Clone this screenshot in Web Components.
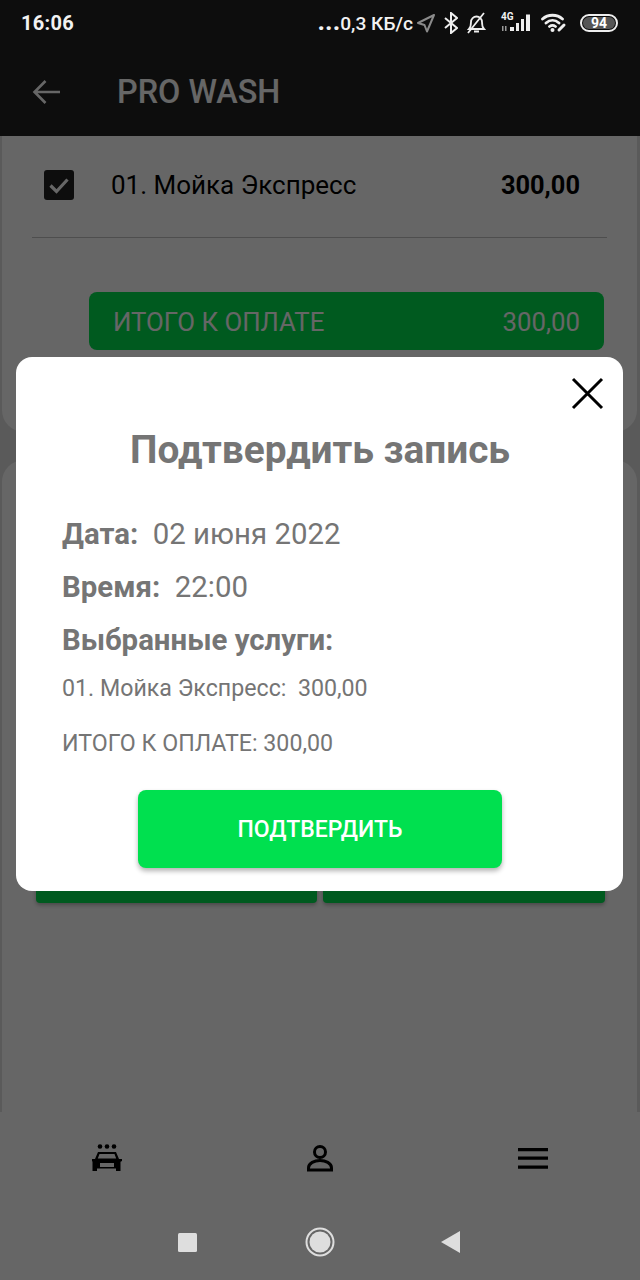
<!DOCTYPE html>
<html lang="ru">
<head>
<meta charset="utf-8">
<title>PRO WASH</title>
<style>
  html, body { margin: 0; padding: 0; background: #666; }
  body { font-family: Roboto, "Liberation Sans", sans-serif; }
</style>
</head>
<body>
<wash-app>
  <status-bar slot="status"></status-bar>
  <app-header slot="content" title="PRO WASH"></app-header>
  <div slot="content" style="flex:1;display:flex;flex-direction:column;min-height:0">
    <order-card></order-card>
    <actions-card></actions-card>
  </div>
  <bottom-nav slot="content"></bottom-nav>
  <confirm-modal slot="modal"></confirm-modal>
  <nav-keys slot="keys"></nav-keys>
</wash-app>

<script>
class WashApp extends HTMLElement {
  connectedCallback() {
    this.attachShadow({ mode: 'open' });
    this.shadowRoot.innerHTML = `
      <style>
        :host { display: flex; flex-direction: column; position: relative; width: 640px; height: 1280px; overflow: hidden; background: #e2e2e2; }
        .content { flex: 1; display: flex; flex-direction: column; min-height: 0; }
        .status { position: relative; z-index: 3; }
        .scrim {
          position: absolute; left: 0; right: 0; top: 46px; bottom: 0;
          background: rgba(0, 0, 0, 0.6);
          z-index: 2;
          padding: 311px 17px 0 16px;
        }
        .keys { position: absolute; left: 0; right: 0; bottom: 0; z-index: 3; }
      </style>
      <div class="status"><slot name="status"></slot></div>
      <div class="content"><slot name="content"></slot></div>
      <div class="scrim"><slot name="modal"></slot></div>
      <div class="keys"><slot name="keys"></slot></div>
    `;
  }
}

class StatusBar extends HTMLElement {
  connectedCallback() {
    this.attachShadow({ mode: 'open' });
    this.shadowRoot.innerHTML = `
      <style>
        :host { display: flex; align-items: center; justify-content: space-between; height: 46px; padding: 0 22px 0 21px; background: #0d0d0d; color: #f2f2f2; font-weight: 700; }
        .time { font-size: 20px; letter-spacing: .3px; }
        .right { display: flex; align-items: center; }
        .speed { font-size: 19.200px; font-weight: 500; margin-right: 3px; white-space: nowrap; }
        .dots { font-size: 26px; font-weight: 700; line-height: 0; }
        svg { display: block; flex: none; }
        .g4 { position: relative; width: 32px; height: 24px; margin-left: 12px; }
        .g4 span { position: absolute; left: 2px; top: 0; font-size: 10px; line-height: 12px; font-weight: 700; }
        .batt { width: 38px; height: 18px; box-sizing: border-box; margin-left: 13px; border: 2px solid #eee; border-radius: 9px; padding: 1px; background: #0d0d0d; }
        .batt span { display: block; height: 100%; border-radius: 6px; background: #555; font-size: 14px; line-height: 12px; text-align: center; color: #fff; }
      </style>
      <span class="time">16:06</span>
      <div class="right">
        <span class="speed"><span class="dots">...</span>0,3 КБ/с</span>
        <svg width="20" height="20" viewBox="0 0 20 20" fill="none" stroke="#8a8a8a" stroke-width="2" stroke-linejoin="round"><path d="M18 2 2 10l6.500 2L11 18.500z"/></svg>
        <svg style="margin-left:8px" width="14" height="22" viewBox="0 0 14 22" fill="none" stroke="#eee" stroke-width="2" stroke-linejoin="miter"><path d="M1 6l12 10-6 5V1l6 5L1 16"/></svg>
        <svg style="margin-left:8px" width="21" height="22" viewBox="0 0 21 22" fill="none" stroke="#eee" stroke-width="1.800"><path d="M3 17c2-2 2-4 2-7 0-3 2.500-5.500 5.500-5.500S16 7 16 10c0 3 0 5 2 7z"/><path d="M8 19.500h5M2 21 18 1"/></svg>
        <div class="g4"><span>4G</span>
          <svg width="32" height="24" viewBox="0 0 32 24" fill="#eee"><path fill="#999" d="M3 15h1.500v5H3zM6 15h1.500v5H6z"/><path d="M11 16h4v4h-4zM17 12h3v8h-3zM22 8h3v12h-3zM27 3.500h4V20h-4z"/></svg>
        </div>
        <svg style="margin-left:10px" width="26" height="20" viewBox="0 0 26 20" fill="none" stroke="#eee" stroke-width="2.800" stroke-linecap="round"><path d="M1.500 6C7 1 16 1 21.500 6M5 10c4-3.500 9-3.500 13 0M8.500 13.500c2-1.500 4-1.500 6 0"/><circle cx="11.500" cy="17" r="2" fill="#eee" stroke="none"/><path d="M18 17l5-5" stroke-width="3"/></svg>
        <div class="batt"><span>94</span></div>
      </div>
    `;
  }
}

class AppHeader extends HTMLElement {
  connectedCallback() {
    this.attachShadow({ mode: 'open' });
    this.shadowRoot.innerHTML = `
      <style>
        :host { display: flex; align-items: center; box-sizing: border-box; height: 90px; padding-top: 2px; background: #212121; color: #fff; flex: none; }
        svg { display: block; margin-left: 32px; }
        .title { margin-left: 57px; font-size: 32.400px; font-weight: 500; }
      </style>
      <svg width="28" height="26" viewBox="0 0 28 26" fill="none" stroke="#fff" stroke-width="2.600"><path d="M28 13H3M13.500 2 2.500 13l11 11"/></svg>
      <span class="title">${this.getAttribute('title')}</span>
    `;
  }
}

class OrderCard extends HTMLElement {
  connectedCallback() {
    this.attachShadow({ mode: 'open' });
    this.shadowRoot.innerHTML = `
      <style>
        :host { display: block; flex: none; background: #fff; margin: 0 3px 0 2px; border-radius: 0 0 22px 22px; height: 296px; color: #000; }
        .row { display: flex; align-items: center; height: 98px; padding: 0 27px 3px 12px; margin: 0 30px; border-bottom: 1px solid #c4c4c4; font-size: 26px; }
        .check { width: 30px; height: 30px; background: #212121; border-radius: 3px; margin-right: 37px; flex: none; }
        .check svg { display: block; }
        .name { flex: 1; }
        .price { font-weight: 700; font-size: 25.400px; }
        .total { display: flex; justify-content: space-between; align-items: center; box-sizing: border-box; height: 58px; margin: 54px 33px 0 87px; padding: 2px 24px 0; background: #00e04f; border-radius: 8px; color: #fff; font-size: 25.800px; }
      </style>
      <div class="row">
        <div class="check"><svg width="30" height="30" viewBox="0 0 30 30" fill="none" stroke="#fff" stroke-width="3.200"><path d="M6.500 15.500l6 6 11-12"/></svg></div>
        <span class="name">01. Мойка Экспресс</span>
        <span class="price">300,00</span>
      </div>
      <div class="total"><span>ИТОГО К ОПЛАТЕ</span><span>300,00</span></div>
    `;
  }
}

class ActionsCard extends HTMLElement {
  connectedCallback() {
    this.attachShadow({ mode: 'open' });
    this.shadowRoot.innerHTML = `
      <style>
        :host { display: block; flex: 1; background: #fff; margin: 28px 3px 0 2px; border-radius: 22px 22px 0 0; padding: 393px 32px 0 34px; }
        .btns { display: grid; grid-template-columns: 281px 282px; gap: 6px; }
        .btns div { height: 50px; background: #00e04f; border-radius: 4px; box-shadow: 0 2px 4px rgba(0,0,0,.3); }
      </style>
      <div class="btns"><div></div><div></div></div>
    `;
  }
}

class BottomNav extends HTMLElement {
  connectedCallback() {
    this.attachShadow({ mode: 'open' });
    this.shadowRoot.innerHTML = `
      <style>
        :host { display: grid; grid-template-columns: repeat(3, 1fr); flex: none; height: 168px; background: #fff; box-sizing: border-box; padding-top: 30px; }
        div { display: flex; justify-content: center; }
        svg { display: block; }
      </style>
      <div><svg width="32" height="32" viewBox="0 0 32 32" fill="#000">
        <circle cx="9" cy="4.500" r="2.300"/><circle cx="16" cy="4.500" r="2.300"/><circle cx="23" cy="4.500" r="2.300"/>
        <path fill-rule="evenodd" d="M7 10h18l3 7h3v2l-1.500 .8v9.200h-4.500v-2.500h-19V29H1.500v-9.200L1 19v-2H4zM8.500 12 6.800 16.500h18.400l-1.700-4.500zM9 21v4h14v-4z"/>
      </svg></div>
      <div><svg style="margin-top:1px" width="32" height="32" viewBox="0 0 32 32" fill="none" stroke="#000" stroke-width="3"><circle cx="16" cy="9" r="5.500"/><path d="M4.500 27v-2c0-5 6-7.500 11.500-7.500s11.500 2.500 11.500 7.500v2z"/></svg></div>
      <div><svg width="32" height="32" viewBox="0 0 32 32" fill="#000"><path d="M1 6h30v3.300H1zM1 14.500h30v3.300H1zM1 23.500h30v3.300H1z"/></svg></div>
    `;
  }
}

class ConfirmModal extends HTMLElement {
  connectedCallback() {
    this.attachShadow({ mode: 'open' });
    this.shadowRoot.innerHTML = `
      <style>
        :host { display: block; position: relative; box-sizing: border-box; height: 534px; padding: 68px 47px 0 46px; background: #fff; border-radius: 16px; color: #757575; }
        .close { position: absolute; top: 20px; right: 18px; display: block; }
        h2 { margin: 0 0 0 2px; font-size: 38.800px; line-height: 50px; font-weight: 700; text-align: center; }
        .line { font-size: 29.400px; line-height: 40px; margin-top: 13px; white-space: pre; }
        .line.first { margin-top: 39px; }
        b { font-weight: 700; }
        .small { font-size: 23.200px; line-height: 30px; margin-top: 13px; white-space: pre; }
        .small.sum { margin-top: 25px; }
        button { display: block; width: 364px; height: 78px; margin: 32px 0 0 76px; border: 0; border-radius: 8px; background: #00e04f; color: #fff; font: 500 23px Roboto, sans-serif; box-shadow: 0 3px 5px rgba(0,0,0,.3); }
      </style>
      <svg class="close" width="34" height="34" viewBox="0 0 34 34" fill="none" stroke="#000" stroke-width="3"><path d="M2 2l29 29M31 2 2 31"/></svg>
      <h2>Подтвердить запись</h2>
      <div class="line first"><b>Дата:</b>  02 июня 2022</div>
      <div class="line"><b>Время:</b>  22:00</div>
      <div class="line"><b>Выбранные услуги:</b></div>
      <div class="small">01. Мойка Экспресс:  300,00</div>
      <div class="small sum">ИТОГО К ОПЛАТЕ: 300,00</div>
      <button>ПОДТВЕРДИТЬ</button>
    `;
  }
}

class NavKeys extends HTMLElement {
  connectedCallback() {
    this.attachShadow({ mode: 'open' });
    this.shadowRoot.innerHTML = `
      <style>
        :host { display: flex; align-items: center; height: 76px; padding-left: 178px; }
        svg { display: block; }
        .home { margin: 0 106px 0 108px; }
      </style>
      <svg width="19" height="19" viewBox="0 0 19 19"><rect width="19" height="19" rx="1.500" fill="#dedede"/></svg>
      <svg class="home" width="30" height="30" viewBox="0 0 30 30"><circle cx="15" cy="15" r="13.500" fill="none" stroke="#dedede" stroke-width="2"/><circle cx="15" cy="15" r="10.500" fill="#dedede"/></svg>
      <svg width="19" height="22" viewBox="0 0 19 22"><path d="M19 0v22L0 11z" fill="#dedede"/></svg>
    `;
  }
}

customElements.define('wash-app', WashApp);
customElements.define('status-bar', StatusBar);
customElements.define('app-header', AppHeader);
customElements.define('order-card', OrderCard);
customElements.define('actions-card', ActionsCard);
customElements.define('bottom-nav', BottomNav);
customElements.define('confirm-modal', ConfirmModal);
customElements.define('nav-keys', NavKeys);
</script>
</body>
</html>
